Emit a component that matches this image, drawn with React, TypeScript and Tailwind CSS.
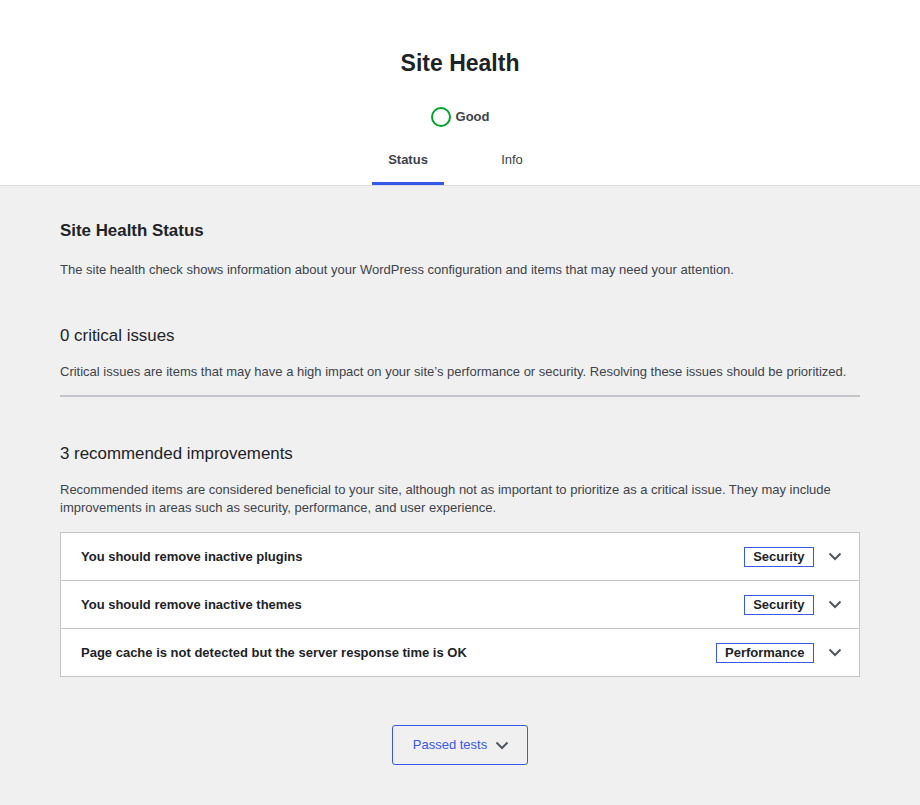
import React, { JSX } from "react";

const issues = [
	{ id: 1, title: "You should remove inactive plugins", badge: "Security" },
	{ id: 2, title: "You should remove inactive themes", badge: "Security" },
	{ id: 3, title: "Page cache is not detected but the server response time is OK", badge: "Performance" },
];

const Chevron = ({ className }: { className?: string }): JSX.Element => (
	<svg viewBox="0 0 14 9" className={className} fill="none" stroke="#50575e" strokeWidth="2">
		<polyline points="1.5,1.5 7,7 12.5,1.5" />
	</svg>
);

export default function App(): JSX.Element {
	return (
		<div className="min-h-screen bg-[#f0f0f1] font-['Liberation_Sans',Arial,sans-serif] text-[13px] text-[#3c434a]">
			<header className="bg-white border-b border-[#dcdcde] pt-[49px] flex flex-col items-center">
				<h1 className="text-[23px] leading-[29px] font-bold text-[#1d2327]">Site Health</h1>

				<div className="mt-[29px] flex items-center gap-[5px] h-5">
					<span className="w-5 h-5 rounded-full border-2 border-[#00a32a]" />
					<span className="font-bold text-[#3c434a] leading-[18px]">Good</span>
				</div>

				<nav className="mt-4 flex">
					<a className="mx-4 w-[72px] pt-2 pb-4 text-center leading-[18px] font-bold text-[#3c434a] shadow-[inset_0_-3px_#3858e9]">
						Status
					</a>
					<a className="mx-4 w-[72px] pt-2 pb-4 text-center leading-[18px] text-[#3c434a]">Info</a>
				</nav>
			</header>

			<main className="max-w-[800px] mx-auto pt-[33px] pb-10">
				<h2 className="text-[16.9px] leading-[24px] font-bold text-[#1d2327]">Site Health Status</h2>
				<p className="mt-[18px] leading-[18px]">
					The site health check shows information about your WordPress configuration and items that may need
					your attention.
				</p>

				<h3 className="mt-[45px] text-[16.9px] leading-[24px] text-[#1d2327]">0 critical issues</h3>
				<p className="mt-[15px] leading-[18px]">
					Critical issues are items that may have a high impact on your site’s performance or security.
					Resolving these issues should be prioritized.
				</p>
				<div className="mt-[14px] h-[2px] bg-[#c3c4c7]" />

				<h3 className="mt-[45px] text-[16.9px] leading-[24px] text-[#1d2327]">3 recommended improvements</h3>
				<p className="mt-[15px] leading-[18px]">
					Recommended items are considered beneficial to your site, although not as important to prioritize as
					a critical issue. They may include improvements in areas such as security, performance, and user
					experience.
				</p>

				<div className="mt-[15px] bg-white border border-[#c3c4c7] divide-y divide-[#c3c4c7]">
					{issues.map(item => (
						<div key={item.id} className="h-[47px] box-content flex items-center pl-5 pr-[17px]">
							<span className="flex-1 font-bold text-[#1d2327] leading-[18px]">{item.title}</span>
							<span className="h-5 border border-[#3858e9] px-[8.5px] leading-[18px] font-bold text-[#1d2327]">
								{item.badge}
							</span>
							<Chevron className="ml-[14px] w-[14px] h-[9px]" />
						</div>
					))}
				</div>

				<div className="mt-12 flex justify-center">
					<button className="h-10 flex items-center pl-5 pr-[18px] border border-[#3858e9] rounded-[3px] text-[#3858e9] leading-[18px]">
						Passed tests
						<Chevron className="ml-2 w-[14px] h-[9px]" />
					</button>
				</div>
			</main>
		</div>
	);
}
